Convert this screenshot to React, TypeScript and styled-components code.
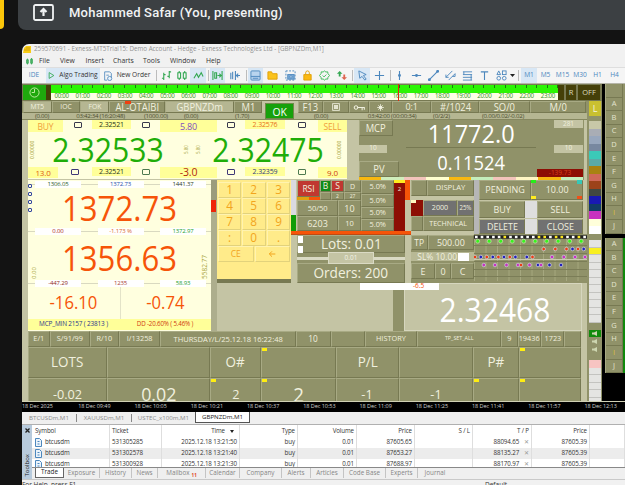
import React from "react";
import styled, { createGlobalStyle, css } from "styled-components";

const C = {
  olive: "#909269",
  dark: "#777952",
  hi: "#a8aa84",
  light: "#c4c4a4",
  cream: "#ffffdf",
  yellow: "#ffff99",
  key: "#ffeb8a",
  green: "#20ad08",
  orange: "#f65408",
  text: "#f0f0df",
};

const Global = createGlobalStyle`
  * { box-sizing: border-box; }
  html, body { margin: 0; background: #131313; overflow: hidden; }
  body { font-family: "Open Sans", "Noto Sans", sans-serif; line-height: 1; }
  svg { display: block; flex: none; }
`;

const Page = styled.div`
  width: 625px; height: 485px; overflow: hidden; background: #131313;
  display: flex; flex-direction: column;
`;
const MeetBar = styled.header`
  display: flex; height: 30px; flex: none; gap: 14px;
`;
const YellowTab = styled.div`
  width: 4px; height: 29px; background: #fbc60a; border-bottom-right-radius: 5px;
`;
const Presenter = styled.div`
  flex: 1; background: #3c4043; border-bottom-left-radius: 8px; padding: 0 0 6px 15px;
  display: flex; align-items: center; gap: 15px; color: #f1f3f4;
  font: 500 13px Roboto, sans-serif; letter-spacing: 0.22px;
`;
const Win = styled.main`
  margin: 14px 0 0 22px; width: 603px; height: 441px; overflow: hidden; background: #f1f1f1;
  border-top-left-radius: 7px; display: flex; flex-direction: column;
`;
const TitleBar = styled.div`
  height: 11px; flex: none; display: flex; align-items: center; gap: 3px; padding-left: 1px;
  font-size: 6.28px; color: #929292; white-space: nowrap;
`;
const MenuBar = styled.nav`
  height: 12px; flex: none; display: flex; align-items: center; font-size: 6.8px; color: #333;
  padding-left: 4px;
`;
const MenuItem = styled.span<{ $w: number }>`width: ${p => p.$w}px; white-space: nowrap;`;
const ToolBar = styled.div`
  height: 17px; flex: none; display: flex; align-items: stretch; background: #f5f5f5;
  border-top: 1px solid #dedede; border-bottom: 1px solid #b5b5a8; white-space: nowrap;
`;
const Tool = styled.div<{ $w: number; $on?: boolean; $c?: string }>`
  width: ${p => p.$w}px; flex: none; display: flex; align-items: center; justify-content: center; gap: 4px;
  background: ${p => (p.$on ? "#d8e7f5" : "transparent")};
  color: ${p => p.$c || "#333"}; font-size: 6.6px;
`;
const ToolSep = styled.div<{ $w: number }>`
  width: ${p => p.$w}px; flex: none; display: flex; justify-content: center;
  &::before { content: ""; width: 1px; margin: 2px 0; background: #bcbcbc; }
`;

const Chart = styled.section`
  height: 317px; flex: none; display: flex; background: #000; gap: 3px;
`;
const Terminal = styled.div`
  width: 580px; flex: none; height: 317px; background: ${C.olive}; overflow: hidden;
`;
const ClockRow = styled.div`
  height: 17px; display: flex; background: ${C.dark}; padding: 1px 0 0 1px; position: relative;
`;
const ClockBox = styled.div`
  width: 23px; height: 15px; background: #1fa80d; display: grid; place-items: center;
`;
const Brown = styled.div<{ $w: number; $mr?: number }>`
  width: ${p => p.$w}px; height: 15px; background: #454009; margin-right: ${p => p.$mr || 0}px;
  color: #deddbf; font-size: 7.5px; display: grid; place-items: center;
`;
const TimeLine = styled.div`width: 507px; height: 15px; background: #fdffe7;`;
const GreenBar = styled.div`
  height: 8px; background: repeating-linear-gradient(90deg, transparent 0 9.6px, #187c0a 9.6px 10.57px) 0 0 / 100% 3px no-repeat, #2cf505;
`;
const Hours = styled.div`
  display: flex; height: 7px; color: #2f8a1c; font-size: 6.2px; letter-spacing: -0.3px; align-items: center;
  span { width: 21.15px; flex: none; text-align: center; }
`;
const NowLine = styled.div`
  position: absolute; left: 376px; top: 0; width: 1px; height: 17px; background: #e8270d;
`;

const Split = styled.div`display: flex; height: 300px;`;
const Body = styled.div`width: 565px; flex: none;`;
const Row = styled.div<{ $h: number; $bg?: string; $pl?: number; $clip?: boolean }>`
  display: flex; height: ${p => p.$h}px; background: ${p => p.$bg || "transparent"};
  padding-left: ${p => p.$pl || 0}px; ${p => p.$clip && "overflow: hidden;"}
`;
const Stack = styled.div<{ $w?: number; $h?: number; $bg?: string; $between?: boolean; $end?: boolean }>`
  display: flex; flex-direction: column; flex: none;
  ${p => p.$w && `width: ${p.$w}px;`} ${p => p.$h && `height: ${p.$h}px;`}
  background: ${p => p.$bg || "transparent"};
  justify-content: ${p => (p.$between ? "space-between" : "flex-start")};
  align-items: ${p => (p.$end ? "flex-end" : "stretch")};
`;
const bevel = css`border: 1px solid; border-color: ${C.hi} ${C.dark} ${C.dark} ${C.hi};`;
const Btn = styled.div<{ $w: number; $h: number; $fs?: number; $bg?: string; $c?: string; $flat?: boolean }>`
  width: ${p => p.$w}px; height: ${p => p.$h}px; flex: none; position: relative;
  ${p => !p.$flat && bevel}
  background: ${p => p.$bg || C.olive}; color: ${p => p.$c || C.text}; font-size: ${p => p.$fs || 8}px;
  display: flex; align-items: center; justify-content: center; white-space: nowrap;
`;
const Squeeze = styled.span<{ $x?: number }>`
  display: inline-block; transform: scaleX(${p => p.$x || 0.94}); white-space: nowrap;
`;
const Strip = styled.div<{ $w: number; $h: number; $bg?: string }>`
  width: ${p => p.$w}px; height: ${p => p.$h}px; flex: none; background: ${p => p.$bg || C.light};
`;
const OkBadge = styled.div`
  position: absolute; left: 3px; top: 2px; width: 29px; height: 16px; background: #17a10b; color: #fff;
  border: 1px solid #6f8b48; font-size: 11px; display: grid; place-items: center; z-index: 2;
`;
const RedMark = styled.i`position: absolute; left: 15px; top: -1px; width: 6px; height: 3px; background: #f04010;`;
const SubLine = styled.div`
  height: 7px; display: flex; align-items: center; background: #b5b692; border-bottom: 1px solid #85875f;
  font-size: 6.1px; letter-spacing: -0.25px; color: #4c4d30; white-space: nowrap;
  span { flex: none; text-align: center; }
`;
const SubText = styled.span<{ $w: number }>`width: ${p => p.$w}px;`;

const Quote = styled.div`width: 319px; height: 59px; background: ${C.cream}; flex: none;`;
const Chip = styled.div<{ $w: number; $h: number; $fs: number; $c: string; $bg?: string }>`
  width: ${p => p.$w}px; height: ${p => p.$h}px; flex: none; background: ${p => p.$bg || C.yellow};
  color: ${p => p.$c}; font-size: ${p => p.$fs}px; display: flex; align-items: center; justify-content: center;
  white-space: nowrap; letter-spacing: -0.15px;
`;
const BoxGap = styled.div<{ $w: number; $c?: string }>`
  width: ${p => p.$w}px; flex: none; height: 10px; display: grid; place-items: center;
  &::before { content: ""; width: 6px; height: 4px; border: 1px solid ${p => p.$c || "#39394d"}; border-radius: 1px; }
`;
const Price = styled.div<{ $w: number; $fs: number; $c: string; $x?: number }>`
  width: ${p => p.$w}px; font-size: ${p => p.$fs}px; color: ${p => p.$c}; flex: none;
  display: flex; align-items: center; justify-content: center; transform: scaleX(${p => p.$x || 0.9});
`;
const Vert = styled.div<{ $w: number; $end?: boolean; $fs?: number }>`
  width: ${p => p.$w}px; flex: none; writing-mode: vertical-rl; transform: rotate(180deg);
  font-size: ${p => p.$fs || 5}px; color: #a8a43e; display: flex; align-items: center;
  justify-content: ${p => (p.$end ? "flex-start" : "center")};
`;

const Metrics = styled.div`
  width: 224px; height: 57px; display: flex; flex: none;
`;
const MetricMid = styled.div`
  width: 135px; color: #fff; padding-left: 5px;
`;
const MetricValue = styled.div<{ $h: number; $fs: number; $line?: boolean }>`
  height: ${p => p.$h}px; font-size: ${p => p.$fs}px; display: grid; place-items: center;
  ${p => p.$line && `border-bottom: 1px solid ${C.dark};`}
`;
const ColorBand = styled.div`
  display: flex; height: 3px; width: 224px;
`;
const Band = styled.i<{ $c: string }>`flex: 1; background: ${p => p.$c};`;

const Account = styled.div`
  width: 183px; height: 151px; flex: none; background: ${C.cream}; position: relative;
`;
const SideDots = styled.div`
  position: absolute; left: 0; top: 4px; display: flex; flex-direction: column; gap: 4px;
  i { width: 4px; height: 4px; border: 1px solid #3346a0; border-radius: 1px; }
`;
const ChipLine = styled.div`
  height: 8px; display: flex; justify-content: space-between; align-items: center; padding: 0 5px 0 7px;
  background: linear-gradient(#d9d9c0, #d9d9c0) 0 50% / 100% 1px no-repeat;
`;
const Half = styled.div`
  width: 91.5px; height: 32px; display: grid; place-items: center; color: ${C.orange}; font-size: 17.7px;
  & + & { border-left: 1px solid #e3e3c8; }
`;

const Keypad = styled.div`
  width: 74px; height: 103px; background: ${C.key}; border-bottom: 4px solid ${C.dark}; flex: none; padding: 2px 1px 0;
`;
const KeyRow = styled.div`display: flex; height: 16px; gap: 1px;`;
const Key = styled.div<{ $small?: boolean }>`
  flex: 1; color: #f2a51d; font-size: ${p => (p.$small ? 8.5 : 12.5)}px; display: grid; place-items: center;
  border: 1px solid; border-color: #fff3b0 #e2d27c #e2d27c #fff3b0;
`;
const OrangeBar = styled.div`height: 4px; background: ${C.orange}; border-bottom: 1px solid #c04a12;`;
const Slider = styled.div`
  width: 108px; height: 10px; background: ${C.olive}; display: flex; align-items: center; flex: none;
  &::before, &::after { content: ""; flex: 1; height: 3px; background: #dadac4; }
`;
const Knob = styled.div`
  width: 46px; height: 12px; background: ${C.light}; border: 1px solid #dadac4; color: #f2f2e4; font-size: 6.5px;
  display: grid; place-items: center; position: relative; z-index: 1;
`;
const Pin = styled.i<{ $x: number; $y: number; $w: number; $h: number; $c: string }>`
  position: absolute; left: ${p => p.$x}px; top: ${p => p.$y}px; width: ${p => p.$w}px; height: ${p => p.$h}px;
  background: ${p => p.$c};
`;
const Anchor = styled.div`position: relative; flex: none;`;
const LastPrice = styled.div`
  width: 178px; height: 48px; background: ${C.light}; border: 1px solid #d6d6be; color: #fff; font-size: 33px;
  display: grid; place-items: center; padding: 4px 0 0 3px;
`;
const Floating = styled.div`
  position: absolute; left: 143px; top: 0; width: 79px; height: 7px; background: #fff; color: ${C.orange};
  font-size: 6.5px; display: flex; align-items: center; padding-left: 53px;
`;

const Rail = styled.div`
  width: 15px; padding: 0 1px 0 2px; display: flex; flex-direction: column; background: ${C.olive};
`;
const Swatch = styled.div<{ $c: string; $h?: number; $line?: boolean }>`
  height: ${p => p.$h || 7.5}px; flex: none; background: ${p => p.$c};
  ${p => p.$line && "border-bottom: 1px solid #c3c3c0;"}
  display: grid; place-items: center; color: #f6f6df; font-size: 9px;
`;
const Side = styled.aside`width: 20px; height: 317px; flex: none;`;
const SideGroup = styled.div<{ $green?: boolean }>`
  background: ${p => (p.$green ? "#118a0c" : C.olive)}; border-left: 1px solid ${C.hi};
  margin-bottom: 4px;
`;
const SideCell = styled.div<{ $c?: string }>`
  width: 17px; height: 13.6px; background: ${C.olive}; border-bottom: 1px solid ${C.dark}; border-right: 1px solid ${C.dark};
  color: ${p => p.$c || "#e4e4cf"}; font-size: 7.5px; display: grid; place-items: center;
`;

const Axis = styled.div`
  height: 11px; flex: none; background: #000; color: #d0d0d0; display: flex; align-items: center;
  font-size: 5.5px; white-space: nowrap; border-top: 1px solid #d0d0b4;
  span { width: 56.25px; flex: none; letter-spacing: -0.05px; }
`;
const DocTabs = styled.div`
  height: 12px; flex: none; display: flex; background: #efefef; color: #8c8c8c; font-size: 6.15px; align-items: center;
`;
const DocTab = styled.div<{ $w: number; $on?: boolean }>`
  width: ${p => p.$w}px; height: ${p => (p.$on ? 11 : 8)}px; display: grid; place-items: center; white-space: nowrap;
  ${p => (p.$on ? "background:#fff;color:#222;border:1px solid #555;border-top:0;margin-bottom:1px;" : "border-right:1px solid #888;")}
  &:nth-child(3) { border-right: 0; }
`;
const Toolbox = styled.section`height: 55px; flex: none; display: flex; border-top: 1px solid #b0b0b0;`;
const BoxHandle = styled.div`
  width: 10px; flex: none; background: #b8cbdd; color: #222; display: flex; flex-direction: column; align-items: center;
  justify-content: space-between; padding: 3px 0 3px; font-size: 6px;
`;
const BoxName = styled.span`writing-mode: vertical-rl; transform: rotate(180deg);`;
const BoxMain = styled.div`flex: 1; min-width: 0; display: flex; flex-direction: column;`;
const Table = styled.div`height: 42px; flex: none; overflow: hidden; background: #fff; font-size: 6.2px; color: #333;`;
const TRow = styled.div<{ $alt?: boolean; $head?: boolean }>`
  height: ${p => (p.$head ? 12 : 11)}px; display: flex; align-items: stretch; padding-left: 1px;
  background: ${p => (p.$alt ? "#ececec" : "#fff")};
`;
const TCell = styled.div<{ $w: number; $left?: boolean }>`
  width: ${p => p.$w}px; flex: none; display: flex; align-items: center; gap: 3px; padding: 0 2px;
  justify-content: ${p => (p.$left ? "flex-start" : "flex-end")}; border-right: 1px solid #dedede;
  white-space: nowrap; letter-spacing: -0.1px;
`;
const Muted = styled.em`font-style: normal; color: #999; margin-left: 2px;`;
const BoxTabs = styled.div`
  height: 13px; flex: none; border-top: 1px solid #888; background: #efefef; display: flex; color: #868686; font-size: 6.3px; padding-left: 3px;
`;
const BoxTab = styled.div<{ $w: number; $on?: boolean }>`
  width: ${p => p.$w}px; flex: none; height: 10px; display: flex; align-items: center; justify-content: center; white-space: nowrap;
  ${p => (p.$on ? "background:#fff;color:#222;border:1px solid #666;border-top:0;" : "border-right:1px solid #c4c4c4;")}
  &:last-child { border-right: 0; }
  sub { font-size: 4.5px; color: #e04020; margin: 4px 0 0 2px; font-weight: 700; }
`;
const StatusBar = styled.footer`
  flex: 1; border-top: 1px solid #c9c9c9; display: flex; font-size: 6.5px; color: #333; padding-top: 2px; overflow: hidden;
  span { width: 463px; flex: none; }
`;

const BLUE = "#4c87bd";
const Ico = ({ children, s = 11, c = BLUE, w = 1 }: { children: React.ReactNode; s?: number; c?: string; w?: number }) => (
  <svg width={s} height={s} viewBox="0 0 12 12" fill="none" stroke={c} strokeWidth={w}>{children}</svg>
);
const Speaker = () => (
  <svg width="7" height="5" viewBox="0 0 7 5"><path d="M0 1.500h2l3-1.500v5L2 3.500H0z" fill="#cdd6b0" /></svg>
);

const hours = Array.from({ length: 24 }, (_, i) => `${String(i).padStart(2, "0")}:00`);
const swatches = ["#c8c8a8", "#a9adb5", "#98a7bd", "#7888a0", "#3bc9b8", "#5aaaa8", "#a88212", "#cf6858", "#9c421a", "#414840", "#1919b2", "#113c66", "#c832c0", "#ffffda", "#ffffff"];
const letters = "ABCDEFGHIJ".split("");
const bands = ["#f8b810", "#d0eebc", "#f3c4bc", "#ffffcf", "#f8b810", "#c4eebc", "#f3c4bc", "#fff6c4", "#f8b810", "#c4eebc"];
const R = "#ee3c12", B = "#2020bd", M = "#c92fc3";
const dots: [number, number, string][] = [
  [69.7, 15, R], [81.3, 15, R], [92.5, 15, R], [98.5, 15, B], [104, 15, R], [109.7, 15, B],
  [1, 23, R], [6.8, 23, B], [12.8, 23, R], [18.8, 23, B], [24.4, 23, R], [30, 23, B], [35.8, 23, R], [41.4, 23, B], [52.8, 23, B], [58.5, 23, R], [78, 23, M], [89.8, 23, M], [101, 23, M], [111, 23, M],
  [9.8, 31, M], [21, 31, M], [32.5, 31, M], [44, 31, M], [47, 31, R], [55.5, 31, M], [64, 31, B], [67, 31, M], [75.5, 31, B], [87, 31, B],
];

const DotBoard = () => (
  <svg width="113" height="49" viewBox="0 0 113 49">
    <rect width="113" height="49" fill={C.olive} />
    {Array.from({ length: 10 }, (_, i) => <path key={i} d={`M${11.5 * i + 0.5} 3v44`} stroke="#a5a77f" />)}
    {[11, 19, 27, 35, 42].map(y => <path key={y} d={`M0 ${y}.5h113`} stroke="#7b7d57" />)}
    <path d="M0 25.5h113" stroke="#c9c9ad" />
    <path d="M0 3h113" stroke="#222" strokeWidth="3.4" />
    {Array.from({ length: 20 }, (_, i) => <rect key={i} x={1 + 5.7 * i} y="1.8" width="2.6" height="2.4" fill={[5, 11, 12, 14, 15, 18].includes(i) ? "#ffe921" : "#fff"} />)}
    {Array.from({ length: 10 }, (_, i) => <circle key={i} cx={3.7 + 11.5 * i} cy="7.2" r="2" fill="#37f51c" stroke="#c4d8a8" strokeWidth=".8" />)}
    {dots.map(([x, y, c], i) => <circle key={i} cx={x} cy={y} r="1.8" fill={c} stroke="#c8c8d0" strokeWidth=".8" />)}
  </svg>
);

const Toolbar = () => (
  <ToolBar>
    <Tool $w={24} $c={BLUE}>IDE</Tool>
    <Tool $w={54} $on><Ico s={7} c="#35a853" w={1.5}><path d="M2 1l8 5-8 5z" /></Ico>Algo Trading</Tool>
    <Tool $w={53}><Ico s={10}><path d="M2 1h6l2 2v5M2 1v10h3M4 5h3" /><circle cx="8" cy="9" r="2.500" fill="#eaf3fb" /></Ico>New Order</Tool>
    <ToolSep $w={6} />
    <Tool $w={14}><Ico c="#35a853" w={1.2}><path d="M3 3v8M1 9h2M3 5h2M9 1v8M7 7h2M9 2h2" /></Ico></Tool>
    <Tool $w={17}><Ico c="#35a853" w={1.2}><path d="M2 3h3v6H2zM8 3h3v6H8zM3.500 1v2M3.500 9v2M9.500 1v2M9.500 9v2" /></Ico></Tool>
    <Tool $w={16} $on><Ico c="#35a853" w={1.2}><path d="M1 9l3-5 2 4 3-5 2 4" /></Ico></Tool>
    <ToolSep $w={4} />
    <Tool $w={15} $on><Ico c="#35a853" w={1.2}><path d="M1 1v10M11 1v10M3 3h2v6H3zM6 6h4M8 4l2 2-2 2" /></Ico></Tool>
    <Tool $w={19}><Ico w={1.2}><path d="M2 3v7M4 2v8M7 1v10M12 6H8M10 4L8 6l2 2" /></Ico></Tool>
    <ToolSep $w={4} />
    <Tool $w={15} $on><Ico><rect x="1" y="1" width="10" height="10" rx="1" fill="#b9d4ee" /><path d="M1 7h10M3 9h6" /></Ico></Tool>
    <Tool $w={19}><Ico c="#e0a008"><path d="M1 2h4l1 2h5v6H1z" fill="#fbc31c" /></Ico></Tool>
    <Tool $w={16}><Ico><path d="M1 1h10v10H1z" strokeDasharray="2 1.500" /><rect x="3" y="5" width="7" height="5" fill="#7aa9d6" /><circle cx="6.500" cy="7.500" r="1.200" fill="#fff" /></Ico></Tool>
    <Tool $w={18}><Ico c="#e0a008"><path d="M4 5V3a2 2 0 014 0v2" /><path d="M2 5h8v6H2z" fill="#fbb911" /></Ico></Tool>
    <Tool $w={17}><Ico c="#35b853"><path d="M6 1l1.500 1.200 2-.2.3 2L11.500 6 9.800 8l-.3 2-2-.2L6 11 4.500 9.800l-2 .2-.3-2L.5 6l1.700-2 .3-2 2 .2z" /><path d="M4 6l1.500 1.500L8 5" /></Ico></Tool>
    <Tool $w={17}><Ico><path d="M3 7V4H1l3-3 3 3H5v3z" fill="#35a853" stroke="none" /><path d="M8 5v3H6l3 3 3-3h-2V5z" fill="#dd6650" stroke="none" /></Ico></Tool>
    <ToolSep $w={4} />
    <Tool $w={16} $on><Ico><path d="M2 1l8 4-3 1 3 4-1.500 1-3-4L3 9z" /></Ico></Tool>
    <Tool $w={19}><Ico w={1.2}><path d="M6 1v10M1 6h10" /></Ico></Tool>
    <ToolSep $w={2} />
    <Tool $w={17}><Ico w={1.2}><path d="M6 1v10" /><circle cx="6" cy="6" r="1" /></Ico></Tool>
    <Tool $w={17}><Ico w={1.2}><path d="M1 6h10" /><circle cx="6" cy="6" r="1" /></Ico></Tool>
    <Tool $w={17}><Ico w={1.2}><path d="M1 11L11 1" /><circle cx="1.500" cy="10.500" r="1" /><circle cx="10.500" cy="1.500" r="1" /></Ico></Tool>
    <Tool $w={17}><Ico><path d="M1 8l7-7M4 11l7-7M1 5v3h3M8 7h3V4" /></Ico></Tool>
    <Tool $w={17}><Ico><path d="M1 2h10M1 5h10M1 8h10M1 11h10M2 2v3M10 5v6" /></Ico></Tool>
    <Tool $w={17}><Ico w={1.2}><path d="M2 2h8M6 2v9" /></Ico></Tool>
    <Tool $w={16}><Ico><path d="M1 5l2-4 2 4z" /><rect x="7" y="1" width="4" height="4" /><circle cx="3" cy="9" r="2" /><circle cx="9" cy="9" r="2" /></Ico></Tool>
    <Tool $w={6}><svg width="5" height="3"><path d="M0 0h5L2.500 3z" fill="#222" /></svg></Tool>
    <ToolSep $w={6} />
    <Tool $w={16} $on $c={BLUE}>M1</Tool>
    <Tool $w={17} $c={BLUE}>M5</Tool>
    <Tool $w={17} $c={BLUE}>M15</Tool>
    <Tool $w={18} $c={BLUE}>M30</Tool>
    <Tool $w={17} $c={BLUE}>H1</Tool>
    <Tool $w={17} $c={BLUE}>H4</Tool>
  </ToolBar>
);

const Buttons = () => (
  <Row $h={12} $bg={C.olive} $pl={1}>
    <Btn $w={29} $h={12} $bg="#b5b692" $fs={7.2}><Squeeze>MT5</Squeeze></Btn>
    <Btn $w={28} $h={12} $fs={7.2}><Squeeze>IOC</Squeeze></Btn>
    <Btn $w={29} $h={12} $bg="#b5b692" $fs={7.2}><Squeeze>FOK</Squeeze></Btn>
    <Btn $w={56} $h={12} $fs={10}><Squeeze>AL-OTAIBI</Squeeze><RedMark /></Btn>
    <Btn $w={69} $h={12} $bg="#b5b692" $fs={10}><Squeeze>GBPNZDm</Squeeze></Btn>
    <Btn $w={28} $h={12} $fs={10}><Squeeze>M1</Squeeze></Btn>
    <Btn $w={36} $h={12} $bg={C.light} $flat><OkBadge><Squeeze>OK</Squeeze></OkBadge></Btn>
    <Btn $w={25} $h={12} $fs={10}><Squeeze>F13</Squeeze></Btn>
    <Btn $w={26} $h={12}><Ico s={8} c={C.text} w={1.3}><rect x="1" y="1" width="10" height="10" /><circle cx="6" cy="6" r="2.500" /><path d="M3 3l6 6M9 3l-6 6" /></Ico></Btn>
    <Btn $w={20} $h={12}><svg width="13" height="7" viewBox="0 0 14 8" fill="none" stroke={C.text} strokeWidth="1.200"><circle cx="3" cy="4" r="2" /><path d="M5 4h8M10 4v3M12.500 4v2.500" /></svg></Btn>
    <Btn $w={23} $h={12}><Ico s={7} c={C.text} w={1.2}><circle cx="6" cy="6" r="2.500" fill={C.text} /><path d="M6 0v12M0 6h12M2 2l8 8M10 2l-8 8" /></Ico></Btn>
    <Btn $w={39} $h={12} $fs={9.5}><Squeeze>0:1</Squeeze></Btn>
    <Btn $w={48} $h={12} $fs={10}><Squeeze>#/1024</Squeeze></Btn>
    <Btn $w={51} $h={12} $fs={10}><Squeeze>SO/0</Squeeze></Btn>
    <Btn $w={56} $h={12} $fs={10}><Squeeze>M/0</Squeeze></Btn>
  </Row>
);

const QuotePanel = () => (
  <Quote>
    <Row $h={13}>
      <Chip $w={35} $h={12} $fs={9} $c="#f0a03c"><Squeeze>BUY</Squeeze></Chip><BoxGap $w={29} />
      <Chip $w={39} $h={9} $fs={7} $c="#26321a">2.32521</Chip><BoxGap $w={29} />
      <Chip $w={57} $h={12} $fs={9} $c="#8050c0">5.80</Chip><BoxGap $w={28} />
      <Chip $w={40} $h={9} $fs={7} $c="#e87018">2.32576</Chip><BoxGap $w={33} />
      <Chip $w={29} $h={12} $fs={9} $c="#f0a03c"><Squeeze>SELL</Squeeze></Chip>
    </Row>
    <Row $h={34}>
      <Vert $w={8}>0.00000</Vert>
      <Price $w={144} $fs={33.5} $c={C.green}>2.32533</Price>
      <Vert $w={12} $fs={4.5}>5.80</Vert><Vert $w={12} $fs={4.5}>5.80</Vert>
      <Price $w={128} $fs={33.5} $c={C.green}>2.32475</Price>
      <Vert $w={14}>0.00000</Vert>
    </Row>
    <Row $h={12}>
      <Chip $w={30} $h={11} $fs={8} $c="#e06010">13.0</Chip><BoxGap $w={34} $c="#403878" />
      <Chip $w={39} $h={9} $fs={7} $c="#26321a">2.32521</Chip><BoxGap $w={29} $c="#4e7a50" />
      <Chip $w={57} $h={11} $fs={10.5} $c="#b02810">-3.0</Chip><BoxGap $w={28} $c="#403878" />
      <Chip $w={40} $h={9} $fs={7} $c="#303c7c">2.32359</Chip><BoxGap $w={33} $c="#4e7a50" />
      <Chip $w={29} $h={11} $fs={8} $c="#d04010">9.0</Chip>
    </Row>
  </Quote>
);

const MetricPanel = () => (
  <Stack $w={224}>
    <Metrics>
      <Stack $w={42} $h={57} $between>
        <Btn $w={34} $h={16} $fs={10}><Squeeze>MCP</Squeeze></Btn>
        <Btn $w={28} $h={8} $fs={6.5} $bg={C.light} $flat>10</Btn>
        <Btn $w={40} $h={16} $fs={10}><Squeeze>PV</Squeeze></Btn>
      </Stack>
      <MetricMid>
        <MetricValue $h={28} $fs={25} $line><Squeeze>11772.0</Squeeze></MetricValue>
        <MetricValue $h={29} $fs={19.5}><Squeeze>0.11524</Squeeze></MetricValue>
      </MetricMid>
      <Stack $w={47} $h={57} $between $end>
        <Btn $w={29} $h={8} $fs={6.5} $bg={C.light} $flat>281</Btn>
        <Btn $w={29} $h={8} $fs={6.5} $bg={C.light} $flat>10</Btn>
        <Btn $w={46} $h={8} $fs={6.5} $bg="#8d0e04" $c="#d6401c" $flat>-139.73</Btn>
      </Stack>
    </Metrics>
    <ColorBand>{bands.map((c, i) => <Band key={i} $c={c} />)}</ColorBand>
  </Stack>
);

const AccountCard = () => (
  <Account>
    <ChipLine>
      <Chip $w={46} $h={7} $fs={6} $c="#2c5c28" $bg="#fff">1306.05</Chip>
      <Chip $w={46} $h={7} $fs={6} $c="#2650a8" $bg="#fff">1372.73</Chip>
      <Chip $w={46} $h={7} $fs={6} $c="#2c3c28" $bg="#fff">1441.37</Chip>
    </ChipLine>
    <SideDots><i /><i /><i /><i /></SideDots>
    <Row $h={39}><Price $w={183} $fs={35} $c={C.orange} $x={0.89}>1372.73</Price></Row>
    <ChipLine>
      <Chip $w={46} $h={7} $fs={6} $c="#a82410" $bg="#fff">0.00</Chip>
      <Chip $w={46} $h={7} $fs={6} $c="#d86830" $bg="#fff">-1.173 %</Chip>
      <Chip $w={46} $h={7} $fs={6} $c="#22a030" $bg="#fff">1372.97</Chip>
    </ChipLine>
    <Row $h={44}>
      <Vert $w={12} $end $fs={6}>0.00</Vert>
      <Price $w={159} $fs={35} $c={C.orange} $x={0.89}>1356.63</Price>
      <Vert $w={12} $end $fs={6.5}>5582.77</Vert>
    </Row>
    <ChipLine>
      <Chip $w={46} $h={7} $fs={6} $c="#902c1c" $bg="#fff">-447.29</Chip>
      <Chip $w={46} $h={7} $fs={6} $c="#a84438" $bg="#fff">1235</Chip>
      <Chip $w={46} $h={7} $fs={6} $c="#22a030" $bg="#fff">58.93</Chip>
    </ChipLine>
    <Row $h={32}><Half><Squeeze>-16.10</Squeeze></Half><Half><Squeeze>-0.74</Squeeze></Half></Row>
    <Row $h={12}>
      <Chip $w={91} $h={11} $fs={6.4} $c="#2a388c">MCP_MIN 2157 ( 23813 )</Chip>
      <Chip $w={92} $h={11} $fs={6.2} $c="#d03c10">DD -20.60% ( 5.46% )</Chip>
    </Row>
  </Account>
);

const KeypadPanel = () => (
  <Keypad>
    {["123", "456", "789", ":0."].map(r => <KeyRow key={r}>{r.split("").map(k => <Key key={k}><Squeeze>{k}</Squeeze></Key>)}</KeyRow>)}
    <KeyRow>
      <Key $small>CE</Key>
      <Key><Ico s={8} c="#f2a51d" w={1.5}><path d="M11 6H2M6 2L2 6l4 4" /></Ico></Key>
    </KeyRow>
  </Keypad>
);

const CenterControls = () => (
  <Stack $w={120} $h={103} $bg={C.light}>
    <Row $h={51}>
      <Stack $w={6}><Strip $w={5} $h={35} $bg="#dadae0" /><Strip $w={5} $h={16} $bg="#109c08" /></Stack>
      <Stack $w={64}>
        <Row $h={20}>
          <Stack $w={23}>
            <Btn $w={23} $h={17} $bg="#c03830" $fs={9}><Squeeze>RSI</Squeeze></Btn>
            <Row $h={3}><Strip $w={12} $h={3} $bg="#e0a010" /><Strip $w={11} $h={3} $bg={C.orange} /></Row>
          </Stack>
          <Stack $w={41}>
            <Row $h={12}>
              <Btn $w={11} $h={12} $bg="#128a18" $fs={8.5}>B</Btn>
              <Btn $w={13} $h={12} $bg="#c03830" $fs={8.5}>S</Btn>
              <Btn $w={17} $h={12} $fs={7}>D</Btn>
            </Row>
            <Row $h={8}><Btn $w={11} $h={8} /><Btn $w={13} $h={8} $fs={5}>2</Btn><Btn $w={17} $h={8} $fs={5}>27</Btn></Row>
          </Stack>
        </Row>
        <Row $h={16}><Btn $w={41} $h={16} $fs={8}><Squeeze>50/50</Squeeze></Btn><Btn $w={23} $h={16} $fs={9}>10</Btn></Row>
        <Row $h={15}><Btn $w={41} $h={15} $fs={9}>6203</Btn><Btn $w={23} $h={15} $fs={7.5}>10</Btn></Row>
      </Stack>
      <Stack $w={33}>{[14, 13, 12, 12].map((h, i) => <Btn key={i} $w={33} $h={h} $fs={7.8}><Squeeze>5.0%</Squeeze></Btn>)}</Stack>
      <Stack $w={11}><Strip $w={11} $h={3} $bg="#ffec20" /><Btn $w={11} $h={12} $bg="#8d0e04" $fs={6} $flat>2</Btn><Strip $w={11} $h={36} $bg="#8d0e04" /></Stack>
      <Stack $w={6}><Strip $w={5} $h={20} $bg={C.orange} /></Stack>
    </Row>
    <OrangeBar />
    <Row $h={48}>
      <Strip $w={6} $h={48} />
      <Stack $w={108}>
        <Btn $w={108} $h={18} $fs={14.5}><Squeeze>Lots: 0.01</Squeeze><Pin $x={0} $y={0} $w={5} $h={7} $c="#fff" /><Pin $x={0} $y={10} $w={5} $h={7} $c="#fff" /></Btn>
        <Slider><Knob>0.01</Knob></Slider>
        <Btn $w={108} $h={20} $fs={14.5}><Squeeze>Orders: 200</Squeeze></Btn>
      </Stack>
    </Row>
  </Stack>
);

const SettingsColumn = () => (
  <Stack $w={63} $h={103} $bg={C.olive}>
    <Row $h={16}><Btn $w={16} $h={16} /><Btn $w={47} $h={16} $fs={7.6}>DISPLAY</Btn></Row>
    <Strip $w={63} $h={4} />
    <Row $h={16}>
      <Btn $w={12} $h={16} $bg="#8d0e04" $flat><Pin $x={0} $y={0} $w={5} $h={3} $c="#fff8c0" /></Btn>
      <Btn $w={34} $h={16} $bg="#717171" $fs={7.2}>2000</Btn><Btn $w={17} $h={16} $bg="#717171" $fs={6.5}><Squeeze>25%</Squeeze></Btn>
    </Row>
    <Row $h={15}><Btn $w={12} $h={15} /><Btn $w={51} $h={15} $fs={7.6}><Squeeze>TECHNICAL</Squeeze></Btn></Row>
    <Strip $w={63} $h={4} />
    <Row $h={15}><Btn $w={17} $h={15} $fs={9}><Squeeze>TP</Squeeze></Btn><Btn $w={46} $h={15} $fs={9.5}><Squeeze>500.00</Squeeze></Btn></Row>
    <Strip $w={63} $h={2} $bg={C.olive} />
    <Btn $w={63} $h={9} $fs={9} $bg="#b8b995" $flat><Anchor><Squeeze>SL% 10.00</Squeeze></Anchor><Strip $w={11} $h={8} $bg="#fff" /></Btn>
    <Strip $w={63} $h={2} $bg={C.olive} />
    <Row $h={16}><Btn $w={24} $h={16} $fs={9}>E</Btn><Btn $w={16} $h={16} $fs={9}>0</Btn><Btn $w={23} $h={16} $fs={9}>C</Btn></Row>
  </Stack>
);

const TradeColumn = () => (
  <Stack $w={113} $h={103} $bg={C.light}>
    <Row $h={54}>
      <Strip $w={5} $h={54} $bg="#b6b6b6" />
      <Stack $w={104} $h={54} $between>
        <Anchor>
          <Row $h={20}><Btn $w={52} $h={20} $fs={9.6}><Squeeze>PENDING</Squeeze></Btn><Btn $w={52} $h={20} $fs={9.5}><Squeeze>10.00</Squeeze></Btn></Row>
          <Pin $x={52} $y={0} $w={5} $h={3} $c="#25ef18" /><Pin $x={98} $y={0} $w={5} $h={4} $c="#35c8b8" />
          <Pin $x={52} $y={16} $w={5} $h={3} $c="#ffec20" /><Pin $x={98} $y={16} $w={5} $h={3} $c="#f05018" />
        </Anchor>
        <Row $h={17}><Btn $w={46} $h={17} $fs={9.5}><Squeeze>BUY</Squeeze></Btn><Strip $w={12} $h={17} $bg="#dedede" /><Btn $w={46} $h={17} $fs={9.5}><Squeeze>SELL</Squeeze></Btn></Row>
        <Row $h={15}><Btn $w={46} $h={15} $fs={9.5} $bg="#717171"><Squeeze>DELETE</Squeeze></Btn><Strip $w={12} $h={15} $bg="#dedede" /><Btn $w={46} $h={15} $fs={9.5} $bg="#717171"><Squeeze>CLOSE</Squeeze></Btn></Row>
      </Stack>
    </Row>
    <DotBoard />
  </Stack>
);

const status: [string, number, number?][] = [["E/1", 22], ["S/91/99", 40], ["R/10", 29], ["I/13258", 41], ["THURSDAY/L/25.12.18 16:22:48", 136, 8], ["10", 35, 8.8], ["", 34], ["HISTORY", 52, 7.8], ["TP_SET_ALL", 84, 5.7], ["9", 17], ["19436", 23], ["1723", 23], ["", 17]];
const gridW = [79, 103, 51, 75, 63, 74, 46, 62];
const head = ["LOTS", "", "O#", "", "P/L", "", "P#", ""];
const vals: [string, number][] = [["-0.02", 13.5], ["0.02", 19], ["2", 13.5], ["2", 20], ["-1", 13.5], ["-1", 13.5], ["", 13], ["", 13]];
const axis = ["18 Dec 2025", "18 Dec 09:49", "18 Dec 10:05", "18 Dec 10:21", "18 Dec 10:37", "18 Dec 10:53", "18 Dec 11:09", "18 Dec 11:25", "18 Dec 11:41", "18 Dec 11:57", "18 Dec 12:13"];
const cols = [77, 52, 78, 58, 59, 58, 58, 59, 58, 35];
const heads = ["Symbol", "Ticket", "Time", "Type", "Volume", "Price", "S / L", "T / P", "Price", ""];
const orders = [
  ["btcusdm", "531305285", "2025.12.18 13:21:50", "buy", "0.01", "87605.65", "", "88094.65", "87605.39", ""],
  ["btcusdm", "531302578", "2025.12.18 13:21:40", "buy", "0.01", "87653.27", "", "88135.27", "87605.39", ""],
  ["btcusdm", "531300928", "2025.12.18 13:21:30", "buy", "0.01", "87688.97", "", "88170.97", "87605.39", ""],
];
const boxTabs: [string, number][] = [["Exposure", 36], ["History", 32], ["News", 26], ["Mailbox", 48], ["Calendar", 34], ["Company", 42], ["Alerts", 29], ["Articles", 33], ["Code Base", 42], ["Experts", 32], ["Journal", 34]];

export default function App() {
  return (
    <Page>
      <Global />
      <MeetBar>
        <YellowTab />
        <Presenter>
          <svg width="21" height="17" viewBox="0 0 21 17" fill="none" stroke="#f1f3f4" strokeWidth="1.800"><rect x="1" y="1" width="19" height="15" rx="1.500" /><path d="M10.500 12V5.500M7.500 8L10.500 5l3 3" strokeWidth="2.200" /></svg>
          Mohammed Safar (You, presenting)
        </Presenter>
      </MeetBar>
      <Win>
        <TitleBar>
          <svg width="8" height="9" viewBox="0 0 8 9"><path d="M1 3l2-2h5v7H0z" fill="#f7cc15" /><path d="M1 5h6M3 3h4" stroke="#c99208" strokeWidth=".8" /></svg>
          259570691 - Exness-MT5Trial15: Demo Account - Hedge - Exness Technologies Ltd - [GBPNZDm,M1]
        </TitleBar>
        <MenuBar>
          <MenuItem $w={13}><Ico s={7} c="#35a853" w={1.5}><path d="M1 3h3v6H1zM8 2h3v7H8zM2.500 1v10M9.500 0v11" /></Ico></MenuItem>
          <MenuItem $w={21}>File</MenuItem><MenuItem $w={25.5}>View</MenuItem><MenuItem $w={27.5}>Insert</MenuItem>
          <MenuItem $w={30}>Charts</MenuItem><MenuItem $w={27}>Tools</MenuItem><MenuItem $w={36}>Window</MenuItem><MenuItem $w={20}>Help</MenuItem>
        </MenuBar>
        <Toolbar />
        <Chart>
          <Terminal>
            <ClockRow>
              <ClockBox><Ico s={11} c="#c8f0a8"><circle cx="6" cy="6" r="5" /><path d="M6 2v4H3" /></Ico></ClockBox>
              <Brown $w={5} />
              <TimeLine><GreenBar /><Hours>{hours.map(h => <span key={h}>{h}</span>)}</Hours></TimeLine>
              <Brown $w={6} $mr={2} /><Brown $w={10} $mr={2}>R</Brown><Brown $w={22}>OFF</Brown>
              <NowLine />
            </ClockRow>
            <Split>
              <Body>
                <Buttons />
                <SubLine>
                  <SubText $w={40}>(0.00)</SubText><SubText $w={77}>03:42:34 (16:20:48)</SubText><SubText $w={34}>(1000.00)</SubText><SubText $w={36}>(0.00)</SubText>
                  <SubText $w={66}>(1.70)</SubText><SubText $w={92}>(0.00)</SubText><SubText $w={50}>03:42:00 (00:00:34)</SubText><SubText $w={49}>(0/2/2)</SubText><SubText $w={74}>(0.00/0.02/-0.02)</SubText>
                </SubLine>
                <Row $h={60} $bg={C.light} $pl={6}>
                  <QuotePanel />
                  <Strip $w={12} $h={60} />
                  <Stack $w={225} $bg={C.olive}><MetricPanel /></Stack>
                </Row>
                <Row $h={151} $bg={C.light} $pl={6}>
                  <AccountCard />
                  <Stack $w={6} $bg="#adae8d"><Strip $w={6} $h={20} $bg="#9b9c7c" /><Strip $w={5} $h={12} $bg="#ee2409" /></Stack>
                  <Stack $w={370}>
                    <Row $h={103}><KeypadPanel /><CenterControls /><SettingsColumn /><TradeColumn /></Row>
                    <Anchor>
                      <Row $h={48}>
                        <Strip $w={176} $h={48} /><Strip $w={11} $h={48} $bg={C.olive} /><LastPrice><Squeeze $x={0.91}>2.32468</Squeeze></LastPrice>
                      </Row>
                      <Floating>-6.5</Floating>
                    </Anchor>
                  </Stack>
                </Row>
                <Row $h={16} $bg={C.light} $pl={6}>
                  {status.map(([t, w, fs], i) => <Btn key={i} $w={w} $h={16} $fs={fs || 7.8}><Squeeze>{t}</Squeeze></Btn>)}
                </Row>
                <Row $h={31} $bg={C.light} $pl={6}>
                  {head.map((t, i) => <Btn key={i} $w={gridW[i]} $h={31} $fs={14.3}><Squeeze>{t}</Squeeze>{(i === 3 || i === 7) && <Pin $x={0} $y={0} $w={5} $h={3} $c="#ffee10" />}</Btn>)}
                </Row>
                <Row $h={23} $bg={C.light} $pl={6} $clip>
                  {vals.map(([t, fs], i) => <Btn key={i} $w={gridW[i]} $h={33} $fs={fs}><Squeeze>{t}</Squeeze>{[2, 3, 6, 7].includes(i) && <Pin $x={0} $y={0} $w={5} $h={3} $c="#ffee10" />}</Btn>)}
                </Row>
              </Body>
              <Rail>
                <Swatch $c="#c9c030" $h={15}>L</Swatch>
                <Swatch $c={C.olive} $h={5} />
                {swatches.map(c => <Swatch key={c} $c={c} />)}
                <Swatch $c={C.olive} $h={6.5} />
                {Array.from({ length: 11 }, (_, i) => <Swatch key={i} $c={i === 1 ? "#f8ef20" : "#e4e4e2"} $line />)}
                <Swatch $c={C.olive} $h={7.5} />
                <Swatch $c="#118a0c" $h={7}><Speaker /></Swatch>
                <Swatch $c={C.olive} $h={8}><Speaker /></Swatch>
                <Swatch $c={C.olive} $h={8}><Speaker /></Swatch>
                <Swatch $c={C.olive} $h={7} />
                <Swatch $c="#f7c4c2" />
                {Array.from({ length: 5 }, (_, i) => <Swatch key={i} $c="#e4e4e2" $line />)}
              </Rail>
            </Split>
          </Terminal>
          <Side>
            <SideGroup>
              <SideCell />
              {letters.map(l => <SideCell key={l} $c={l === "I" ? "#dcc040" : undefined}>{l}</SideCell>)}
            </SideGroup>
            <SideGroup $green>{letters.map(l => <SideCell key={l} $c={l === "I" ? "#dcc040" : undefined}>{l}</SideCell>)}</SideGroup>
          </Side>
        </Chart>
        <Axis>{axis.map(t => <span key={t}>{t}</span>)}</Axis>
        <DocTabs>
          <DocTab $w={55}>BTCUSDm,M1</DocTab><DocTab $w={55}>XAUUSDm,M1</DocTab><DocTab $w={63}>USTEC_x100m,M1</DocTab><DocTab $w={55} $on>GBPNZDm,M1</DocTab>
        </DocTabs>
        <Toolbox>
          <BoxHandle><svg width="5" height="5"><path d="M.5.500l4 4M4.500.500l-4 4" stroke="#222" strokeWidth="1.300" /></svg><BoxName>Toolbox</BoxName></BoxHandle>
          <BoxMain>
            <Table>
              <TRow $head>{heads.map((h, i) => <TCell key={i} $w={cols[i]} $left={i < 2}>{h}{i === 2 && <svg width="9" height="3"><path d="M2 0h4L4 3z" fill="#222" /></svg>}</TCell>)}</TRow>
              {orders.map((o, r) => (
                <TRow key={r} $alt={r === 1}>
                  {o.map((v, i) => (
                    <TCell key={i} $w={cols[i]} $left={i < 2}>
                      {i === 0 && <svg width="7" height="9" viewBox="0 0 7 9" fill="#eaf3fb" stroke={BLUE}><path d="M.5.500h4l2 2v6h-6zM2.500 3.500h2M2.500 6h2" /></svg>}
                      {v}{i === 7 && <Muted>✕</Muted>}
                    </TCell>
                  ))}
                </TRow>
              ))}
            </Table>
            <BoxTabs>
              <BoxTab $w={29} $on>Trade</BoxTab>
              {boxTabs.map(([t, w]) => <BoxTab key={t} $w={w}>{t}{t === "Mailbox" && <sub>11</sub>}</BoxTab>)}
            </BoxTabs>
          </BoxMain>
        </Toolbox>
        <StatusBar><span>For Help, press F1</span><span>Default</span></StatusBar>
      </Win>
    </Page>
  );
}
